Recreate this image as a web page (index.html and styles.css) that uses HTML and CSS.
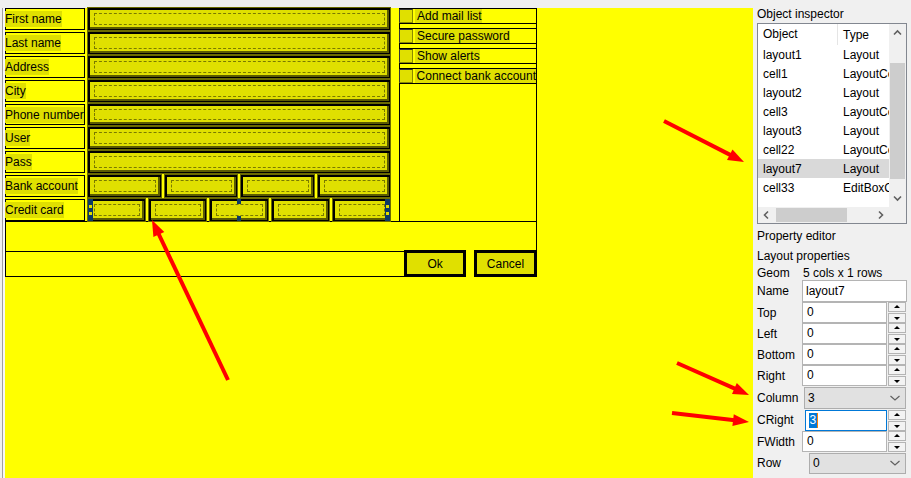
FILE: index.html
```html
<!DOCTYPE html>
<html>
<head>
<meta charset="utf-8">
<link rel="stylesheet" href="styles.css">
</head>
<body>
<div class="app">
  <div class="edge"></div>
  <div class="canvas">
    <div class="form">
      <div class="top">
        <div class="labels">
          <div class="lbl"><span>First name</span></div>
          <div class="lbl"><span>Last name</span></div>
          <div class="lbl"><span>Address</span></div>
          <div class="lbl"><span>City</span></div>
          <div class="lbl"><span>Phone number</span></div>
          <div class="lbl"><span>User</span></div>
          <div class="lbl"><span>Pass</span></div>
          <div class="lbl"><span>Bank account</span></div>
          <div class="lbl"><span>Credit card</span></div>
        </div>
        <div class="edits">
          <div class="erow"><div class="edit"><i></i></div></div>
          <div class="erow"><div class="edit"><i></i></div></div>
          <div class="erow"><div class="edit"><i></i></div></div>
          <div class="erow"><div class="edit"><i></i></div></div>
          <div class="erow"><div class="edit"><i></i></div></div>
          <div class="erow"><div class="edit"><i></i></div></div>
          <div class="erow"><div class="edit"><i></i></div></div>
          <div class="erow"><div class="edit"><i></i></div><div class="edit"><i></i></div><div class="edit"><i></i></div><div class="edit"><i></i></div></div>
          <div class="erow sel">
            <div class="edit"><i></i></div><div class="edit"><i></i></div><div class="edit"><i></i></div><div class="edit"><i></i></div><div class="edit"><i></i></div>
            <span class="hnd hl"><u></u><u></u></span>
            <span class="hnd hr"><u></u><u></u></span>
            <span class="hnd ht"></span>
            <span class="hnd hb"></span>
          </div>
        </div>
        <div class="checks">
          <div class="chk"><span class="cb"></span><span class="ct">Add mail list</span></div>
          <div class="chk"><span class="cb"></span><span class="ct">Secure password</span></div>
          <div class="chk"><span class="cb"></span><span class="ct">Show alerts</span></div>
          <div class="chk"><span class="cb"></span><span class="ct">Connect bank account</span></div>
        </div>
      </div>
      <div class="mid"></div>
      <div class="bottom">
        <div class="bfill"></div>
        <div class="btn ok">Ok</div>
        <div class="btn cancel">Cancel</div>
      </div>
    </div>
  </div>
  <div class="panel">
    <div class="ptitle">Object inspector</div>
    <div class="list">
      <div class="lcontent">
        <div class="lhead"><span class="c1">Object</span><span class="c2">Type</span></div>
        <div class="lrow"><span class="c1">layout1</span><span class="c2">Layout</span></div>
        <div class="lrow"><span class="c1">cell1</span><span class="c2">LayoutCell</span></div>
        <div class="lrow"><span class="c1">layout2</span><span class="c2">Layout</span></div>
        <div class="lrow"><span class="c1">cell3</span><span class="c2">LayoutCell</span></div>
        <div class="lrow"><span class="c1">layout3</span><span class="c2">Layout</span></div>
        <div class="lrow"><span class="c1">cell22</span><span class="c2">LayoutCell</span></div>
        <div class="lrow selrow"><span class="c1">layout7</span><span class="c2">Layout</span></div>
        <div class="lrow"><span class="c1">cell33</span><span class="c2">EditBoxCell</span></div>
      </div>
      <div class="vscroll">
        <svg class="chev" width="17" height="17" viewBox="0 0 17 17"><polyline points="5,10.5 8.5,7 12,10.5" /></svg>
        <div class="vtrack"><div class="vthumb"></div></div>
        <svg class="chev" width="17" height="17" viewBox="0 0 17 17"><polyline points="5,6.5 8.5,10 12,6.5" /></svg>
      </div>
      <div class="hscroll">
        <svg class="chev" width="17" height="16" viewBox="0 0 17 16"><polyline points="10,4.5 6.5,8 10,11.5" /></svg>
        <div class="htrack"><div class="hthumb"></div></div>
        <svg class="chev" width="17" height="16" viewBox="0 0 17 16"><polyline points="7,4.5 10.5,8 7,11.5" /></svg>
      </div>
      <div class="corner"></div>
    </div>
    <div class="ph">Property editor</div>
    <div class="ph2">Layout properties</div>
    <div class="geom"><span class="pl">Geom</span><span>5 cols x 1 rows</span></div>
    <div class="prow r-name"><span class="pl">Name</span><div class="inp wide">layout7</div></div>
    <div class="prow r21"><span class="pl">Top</span><div class="inp">0</div><div class="spin"><b class="up"></b><b class="dn"></b></div></div>
    <div class="prow r21"><span class="pl">Left</span><div class="inp">0</div><div class="spin"><b class="up"></b><b class="dn"></b></div></div>
    <div class="prow r21"><span class="pl">Bottom</span><div class="inp">0</div><div class="spin"><b class="up"></b><b class="dn"></b></div></div>
    <div class="prow r21"><span class="pl">Right</span><div class="inp">0</div><div class="spin"><b class="up"></b><b class="dn"></b></div></div>
    <div class="prow r-col"><span class="pl">Column</span><div class="combo c-col"><span>3</span><svg width="12" height="8" viewBox="0 0 12 8"><polyline points="1.5,2 6,6 10.5,2" /></svg></div></div>
    <div class="prow r-cr"><span class="pl">CRight</span><div class="inp focus"><span class="seltext">3</span><span class="caret"></span></div><div class="spin"><b class="up"></b><b class="dn"></b></div></div>
    <div class="prow r21"><span class="pl">FWidth</span><div class="inp">0</div><div class="spin"><b class="up"></b><b class="dn"></b></div></div>
    <div class="prow r-row"><span class="pl">Row</span><div class="combo c-row"><span>0</span><svg width="12" height="8" viewBox="0 0 12 8"><polyline points="1.5,2 6,6 10.5,2" /></svg></div></div>
  </div>
</div>
<svg class="arrows" width="911" height="478" viewBox="0 0 911 478">
  <g stroke="#ff0000" stroke-width="4" fill="none">
    <line x1="228" y1="380" x2="156.3" y2="229" />
    <line x1="664" y1="121" x2="735.1" y2="157.4" />
    <line x1="677" y1="363" x2="739.9" y2="390.9" />
    <line x1="672" y1="413" x2="739.1" y2="420.8" />
  </g>
  <g fill="#ff0000">
    <polygon points="152,220 164.3,231.9 153.4,237.0" />
    <polygon points="744,162 727.0,160.0 732.5,149.4" />
    <polygon points="749,395 732.0,394.0 736.8,383.0" />
    <polygon points="749,422 732.4,426.1 733.8,414.2" />
  </g>
</svg>
</body>
</html>
```

FILE: styles.css
```css
* { box-sizing: border-box; margin: 0; padding: 0; }
html, body { width: 911px; height: 478px; overflow: hidden; }
body {
  background: #f0f0f0;
  font-family: "Liberation Sans", Arial, sans-serif;
  font-size: 12px;
  color: #000;
  position: relative;
}
.app { display: flex; height: 478px; }
.edge {
  width: 5px;
  margin-top: 8px;
  background: linear-gradient(to right, #f0f0f0 0, #f0f0f0 2px, #a0a0a0 2px, #a0a0a0 3px, #f7f7f7 3px);
}
.canvas {
  width: 748px;
  margin-top: 8px;
  height: 470px;
  background: #ffff00;
}
.form { width: 532px; }
.top { display: flex; height: 213px; }
.labels { width: 80px; display: flex; flex-direction: column; gap: 2px; }
.lbl {
  height: 22px;
  border: 1px solid #000;
  display: flex;
  align-items: center;
}
.lbl span {
  background: #e0e000;
  line-height: 16px;
  height: 16px;
  white-space: nowrap;
  margin-left: -1px;
}
.edits {
  width: 302px;
  margin-left: 3px;
  display: flex;
  flex-direction: column;
  gap: 2px;
}
.erow { height: 22px; display: flex; gap: 4px; position: relative; }
.edit {
  flex: 1;
  position: relative;
  background: #e0e000;
  border: 1px solid #000;
  box-shadow: inset 1px 1px 0 #000, inset -2px -2px 0 #5c5c00;
  outline: 1px solid #6b6b00;
}
.edit i {
  position: absolute;
  left: 5px; top: 4px; right: 4px; bottom: 4px;
  border: 1px dashed #7a7a00;
}
.hnd { position: absolute; background: #0c3a66; }
.hnd.hl, .hnd.hr {
  top: 0; bottom: 0; width: 5px;
  display: flex; flex-direction: column; justify-content: center; align-items: center; gap: 4px;
}
.hnd.hl { left: 0; }
.hnd.hr { right: 0; }
.hnd u { display: block; width: 3px; height: 3px; background: #e0e000; }
.hnd.ht, .hnd.hb { left: 149px; width: 4px; height: 5px; }
.hnd.ht { top: 0; }
.hnd.hb { bottom: 0; }
.checks {
  width: 138px;
  margin-left: 9px;
  border-left: 1px solid #000;
  border-right: 1px solid #000;
  height: 214px;
  display: flex;
  flex-direction: column;
  gap: 4px;
}
.chk {
  height: 16px;
  border-top: 1px solid #000;
  border-bottom: 1px solid #000;
  display: flex;
  align-items: center;
  white-space: nowrap;
}
.chk .cb {
  width: 14px; height: 14px;
  background: #e0e000;
  border: 1px solid #333;
  border-right-color: #8a8a00;
  border-bottom-color: #8a8a00;
  margin-left: -1px;
}
.chk .ct {
  background: #e0e000;
  height: 14px;
  line-height: 14px;
  padding-left: 2px;
  margin-left: 2px;
}
.mid {
  height: 30px;
  border: 1px solid #000;
  border-bottom: none;
}
.bottom { display: flex; height: 26px; }
.bfill {
  width: 400px;
  border-top: 1px solid #000;
  border-left: 1px solid #000;
  border-bottom: 1px solid #000;
}
.btn {
  height: 27px;
  margin-top: -1px;
  border: 3px solid #000;
  background: #e0e000;
  display: flex;
  align-items: center;
  justify-content: center;
}
.btn.ok { width: 62px; }
.btn.cancel { width: 63px; margin-left: 8px; flex-shrink: 0; }

/* panel */
.panel {
  width: 158px;
  padding-left: 4px;
  background: #f0f0f0;
}
.ptitle { height: 23px; padding-top: 7px; line-height: 15px; }
.list {
  width: 150px;
  height: 201px;
  border: 1px solid #828790;
  background: #fff;
  display: grid;
  grid-template-columns: 131px 17px;
  grid-template-rows: 183px 16px;
}
.lcontent { overflow: hidden; }
.lhead { height: 21px; display: flex; align-items: center; }
.lhead .c1 { border-right: 1px solid #e5e5e5; height: 21px; line-height: 21px; }
.lrow { height: 19px; display: flex; align-items: center; }
.c1 { width: 80px; padding-left: 5px; flex-shrink: 0; }
.c2 { padding-left: 5px; white-space: nowrap; }
.selrow { background: #d9d9d9; }
.vscroll {
  background: #f0f0f0;
  display: flex;
  flex-direction: column;
}
.vtrack { flex: 1; position: relative; }
.vthumb { position: absolute; left: 1px; right: 1px; top: 22px; bottom: 11px; background: #cdcdcd; }
.hscroll { background: #f0f0f0; display: flex; }
.htrack { flex: 1; position: relative; }
.hthumb { position: absolute; top: 1px; bottom: 1px; left: 1px; width: 71px; background: #cdcdcd; }
.corner { background: #f0f0f0; }
.chev { display: block; flex-shrink: 0; }
.chev polyline { fill: none; stroke: #606060; stroke-width: 1.6; }
.ph { height: 22px; padding-top: 3px; line-height: 19px; }
.ph2 { height: 20px; line-height: 20px; }
.geom { height: 14px; line-height: 14px; display: flex; }
.geom .pl { width: 46px; }
.prow { display: flex; align-items: center; }
.pl { width: 45px; flex-shrink: 0; }
.r-name { height: 22px; }
.r21 { height: 21px; }
.r-col { height: 23px; }
.r-cr { height: 22px; }
.r-row { height: 22px; }
.inp {
  width: 85px;
  height: 21px;
  background: #fff;
  border: 1px solid #b4b4b4;
  padding-left: 4px;
  line-height: 19px;
  display: flex;
  align-items: center;
}
.inp.wide { width: 105px; height: 22px; padding-left: 3px; }
.inp.focus { border-color: #0078d7; width: 82px; margin-left: 3px; padding-left: 3px; }
.seltext { background: #0078d7; color: #fff; line-height: 15px; padding: 0 0.5px; }
.caret { width: 1px; height: 15px; background: #ff8000; }
.spin {
  width: 18px;
  height: 21px;
  margin-left: 1px;
  display: flex;
  flex-direction: column;
  gap: 1px;
}
.spin b {
  flex: 1;
  background: #f3f3f3;
  border: 1px solid #b4b4b4;
  position: relative;
}
.spin b::after {
  content: "";
  position: absolute;
  left: 5px; top: 2px;
  border-left: 3px solid transparent;
  border-right: 3px solid transparent;
}
.spin b.up::after { border-bottom: 3px solid #000; }
.spin b.dn::after { border-top: 3px solid #000; top: 3px; }
.combo {
  height: 22px;
  background: #e1e1e1;
  border: 1px solid #adadad;
  display: flex;
  align-items: center;
  justify-content: space-between;
  padding: 0 4px 0 3px;
}
.combo svg polyline { fill: none; stroke: #606060; stroke-width: 1.2; }
.c-col { width: 102px; margin-left: 2px; }
.c-row { width: 97px; margin-left: 7px; height: 21px; }
.arrows { position: absolute; left: 0; top: 0; pointer-events: none; }
```
